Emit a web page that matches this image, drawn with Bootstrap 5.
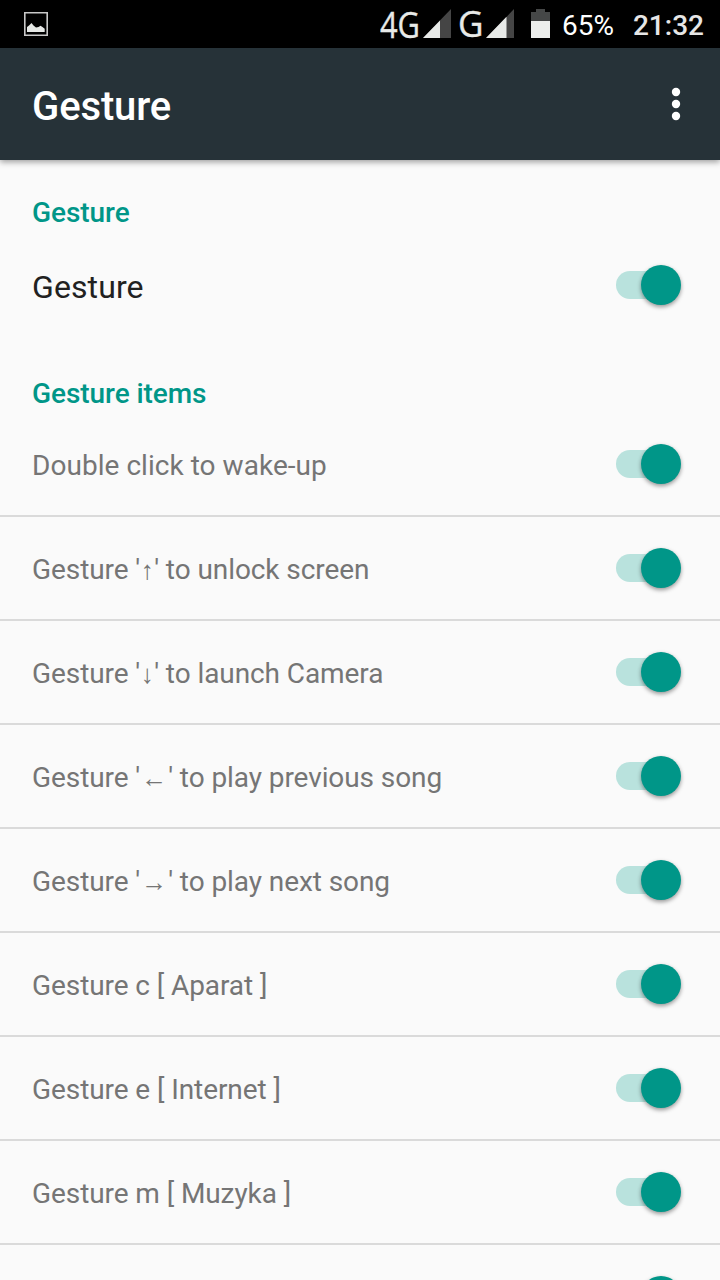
<!DOCTYPE html>
<html lang="en">
<head>
<meta charset="utf-8">
<meta name="viewport" content="width=device-width, initial-scale=1">
<title>Gesture</title>
<link href="https://cdn.jsdelivr.net/npm/bootstrap@5.3.0/dist/css/bootstrap.min.css" rel="stylesheet">
<style>
body{font-family:Roboto,"Noto Sans",sans-serif;background:#fafafa;color:#212121}
.screen{height:100vh}
.status-bar{height:48px;background:#000;color:#fff;font-size:28px;line-height:48px;padding:0 16px 0 24px}
.status-bar svg{display:block;flex:none}
.percent{margin-left:10px;padding-top:4px}
.clock{margin-left:19px;padding-top:4px;color:#e6e6e6;font-weight:500}
.app-bar{height:112px;background:#263238;box-shadow:0 2px 6px rgba(0,0,0,.38);padding:0 32px}
.app-title{font-size:40px;font-weight:500;line-height:48px;color:#fff;padding-top:5px;letter-spacing:-.12px}
.section-title{font-size:28px;font-weight:500;line-height:32px;color:#009688;padding:0 32px;margin:0;letter-spacing:-.06px}
.main-heading{margin-top:37px}
.main-row{height:102px;margin-top:5px;padding:0 39px 0 32px;font-size:32px;line-height:40px;letter-spacing:.1px}
.items-heading{margin-top:42px;margin-bottom:3px}
.gesture-row{height:104px;padding:0 39px 0 32px;font-size:28px;line-height:32px;color:#757575;border-bottom:2px solid #dadada;letter-spacing:-.08px}
.gesture-row:first-child{letter-spacing:.04px}
.row-label{padding-top:3px}
.toggle{width:65px;height:40px;flex:none}
.toggle-track{width:50px;height:28px;border-radius:14px;background:#b9e2dd}
.toggle-knob{width:40px;height:40px;margin-left:-25px;border-radius:50%;background:#009688;box-shadow:0 2px 4px rgba(0,0,0,.4)}
.arrow{font-family:"Liberation Serif",serif;font-size:26px;line-height:1;display:inline-block;text-align:center}
.arrow-v{width:14px}
.arrow-h{width:28px}
</style>
</head>
<body>
<div class="screen overflow-hidden d-flex flex-column">
<header>
  <div class="status-bar d-flex align-items-center">
    <svg width="24" height="24" viewBox="0 0 24 24"><path d="M.8.8h22.4v22.4H.8z" fill="none" stroke="#c8c8c8" stroke-width="1.600"/><path d="M3 20v-5l2-1.500L7.500 11l2 2.500L12 15.500l2.500-.5 2-1.200 2 1.200 2.200 1.700V20z" fill="#e6e8e6"/></svg>
    <svg class="ms-auto" width="172" height="48" viewBox="380 0 172 48">
      <g font-family="Open Sans, sans-serif" font-size="36" fill="#e8eae8">
        <text x="380" y="37.500" textLength="40" lengthAdjust="spacingAndGlyphs" stroke="#e8eae8" stroke-width=".4">4G</text>
        <text x="458" y="36.500" textLength="25.500" lengthAdjust="spacingAndGlyphs" stroke="#e8eae8" stroke-width=".4">G</text>
      </g>
      <path d="M423 38 451 9v29zM486 38l28-29v29z" fill="#454545"/>
      <path d="M423 38l17-17.600V38zM486 38l20.500-21.200V38z" fill="#e8eae8"/>
      <path d="M531 12h5v-3h9v3h5v9h-19z" fill="#454747"/><path d="M531 21h19v17h-19z" fill="#eceeec"/>
    </svg>
    <span class="percent">65%</span>
    <span class="clock">21:32</span>
  </div>
  <nav class="app-bar d-flex align-items-center justify-content-between">
    <h1 class="app-title m-0">Gesture</h1>
    <svg width="24" height="36" viewBox="0 0 24 36" fill="#fff"><circle cx="12" cy="6" r="4.200"/><circle cx="12" cy="18" r="4.200"/><circle cx="12" cy="30" r="4.200"/></svg>
  </nav>
</header>
<main class="flex-grow-1 overflow-hidden">
  <h2 class="section-title main-heading">Gesture</h2>
  <div class="main-row d-flex align-items-center justify-content-between"><span class="row-label">Gesture</span><span class="toggle d-flex align-items-center"><span class="toggle-track flex-shrink-0"></span><span class="toggle-knob flex-shrink-0"></span></span></div>
  <h2 class="section-title items-heading">Gesture items</h2>
  <div id="gestures"></div>
</main>
</div>
<script src="https://cdn.jsdelivr.net/npm/bootstrap@5.3.0/dist/js/bootstrap.bundle.min.js"></script>
<script>
const gestures = [
  "Double click to wake-up",
  "Gesture '<span class=\"arrow arrow-v\">↑</span>' to unlock screen",
  "Gesture '<span class=\"arrow arrow-v\">↓</span>' to launch Camera",
  "Gesture '<span class=\"arrow arrow-h\">←</span>' to play previous song",
  "Gesture '<span class=\"arrow arrow-h\">→</span>' to play next song",
  "Gesture c [ Aparat ]",
  "Gesture e [ Internet ]",
  "Gesture m [ Muzyka ]",
  ""
];
document.getElementById("gestures").innerHTML = gestures.map(label =>
  `<div class="gesture-row d-flex align-items-center justify-content-between"><span class="row-label">${label}</span><span class="toggle d-flex align-items-center"><span class="toggle-track flex-shrink-0"></span><span class="toggle-knob flex-shrink-0"></span></span></div>`).join("");
</script>
</body>
</html>
